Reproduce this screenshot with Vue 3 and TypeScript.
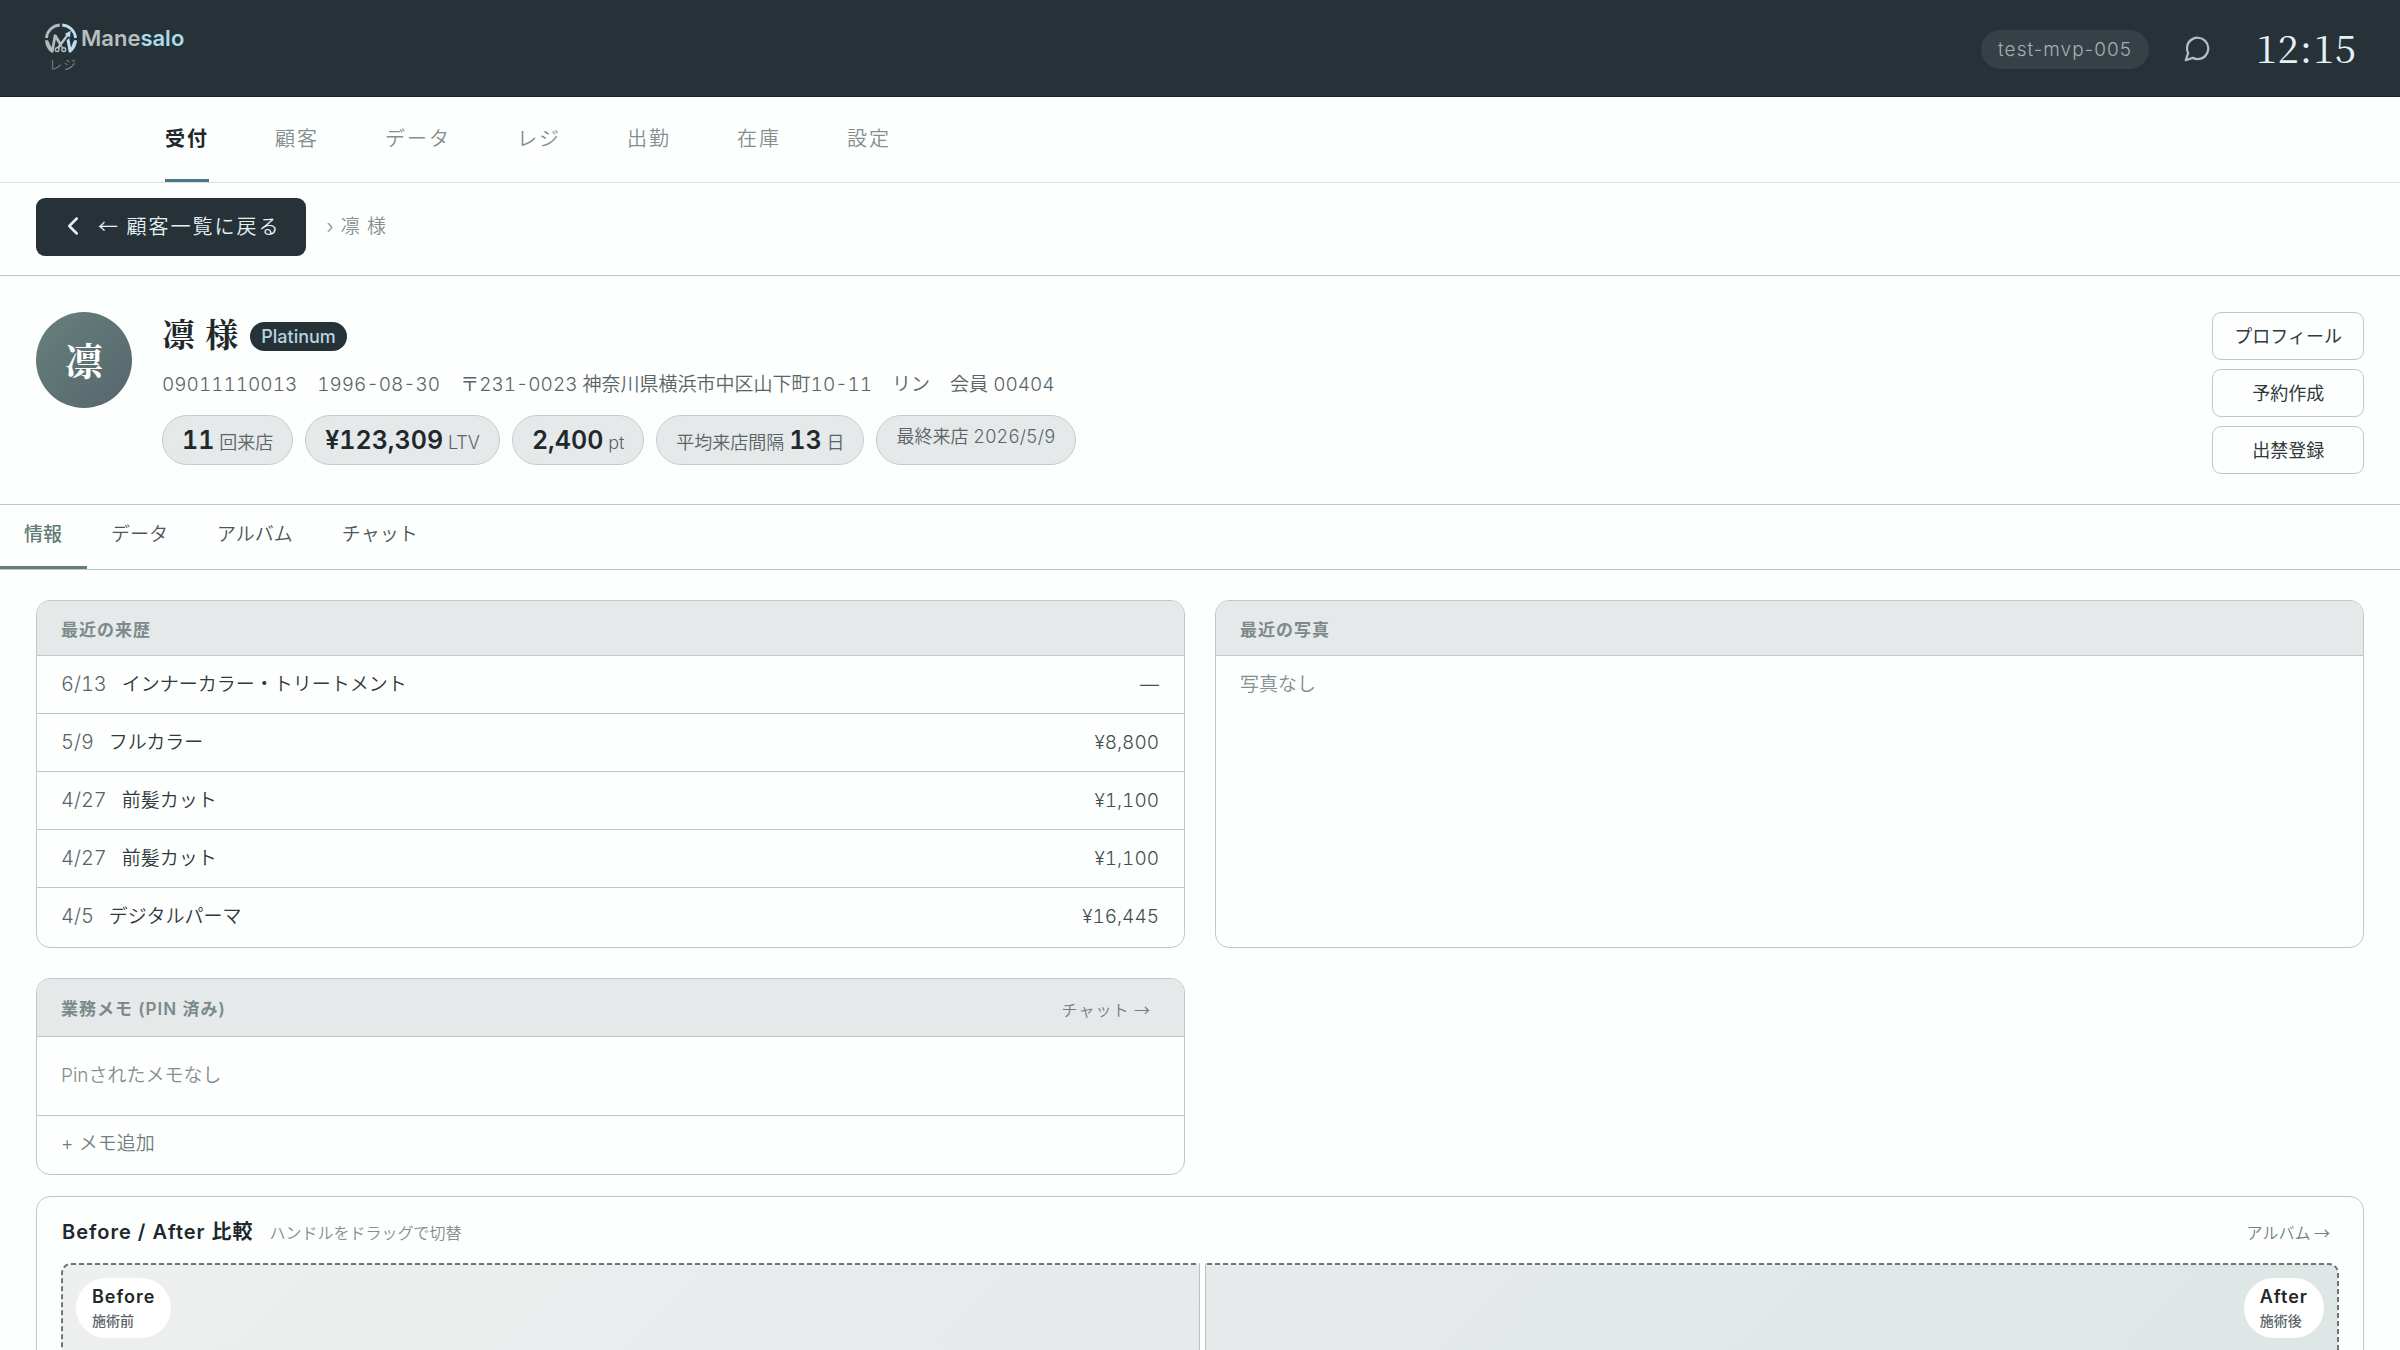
<script setup lang="ts">
import { ref } from 'vue'

interface Visit {
  date: string
  menu: string
  price: string
}

interface Stat {
  before?: string
  value?: string
  after?: string
}

const navItems: string[] = ['受付', '顧客', 'データ', 'レジ', '出勤', '在庫', '設定']
const activeNav = ref('受付')

const tabs: string[] = ['情報', 'データ', 'アルバム', 'チャット']
const activeTab = ref('情報')

const details: string[] = [
  '09011110013',
  '1996-08-30',
  '〒231-0023 神奈川県横浜市中区山下町10-11',
  'リン',
  '会員 00404',
]

const stats: Stat[] = [
  { value: '11', after: ' 回来店' },
  { value: '¥123,309', after: ' LTV' },
  { value: '2,400', after: ' pt' },
  { before: '平均来店間隔 ', value: '13', after: ' 日' },
  { before: '最終来店 2026/5/9' },
]

const actions: string[] = ['プロフィール', '予約作成', '出禁登録']

const visits: Visit[] = [
  { date: '6/13', menu: 'インナーカラー・トリートメント', price: '—' },
  { date: '5/9', menu: 'フルカラー', price: '¥8,800' },
  { date: '4/27', menu: '前髪カット', price: '¥1,100' },
  { date: '4/27', menu: '前髪カット', price: '¥1,100' },
  { date: '4/5', menu: 'デジタルパーマ', price: '¥16,445' },
]

const split = ref(50)
</script>

<template>
  <div class="app">
    <header class="topbar">
      <a class="brand" href="#">
        <span class="brand-row">
          <svg class="brand-mark" viewBox="0 0 34 30" aria-hidden="true">
            <g fill="none" stroke-width="2.8">
              <path d="M15.8 2A14.4 14.4 0 0 0 2.4 15" stroke="#b4babc" />
              <path d="M18.2 2A14.4 14.4 0 0 1 31.6 15" stroke="#b9dff0" />
            </g>
            <path d="M1 17.200H4L7.600 24.500L9.800 11.500H12.200L17.400 20L15.600 22.600L11.800 16.500L9.400 29.500H7.200C3.400 26.500 1.200 22 1 17.200Z" fill="#b4babc" />
            <path d="M33 17.200H30L27 24.500L25.200 15L22.600 17.500L24.800 29.500H26.800C30.600 26.500 32.800 22 33 17.200Z" fill="#b9dff0" />
            <path d="M14 25L24 11.500" fill="none" stroke="#b6ccd6" stroke-width="2.200" />
            <path d="M20.800 11L26.600 7.800L26 14.400Z" fill="#b9dff0" />
            <circle cx="13.200" cy="26.600" r="1.900" fill="none" stroke="#b4babc" stroke-width="1.400" />
            <circle cx="19.800" cy="26.600" r="1.900" fill="none" stroke="#b6c4ca" stroke-width="1.400" />
            <path d="M15.800 21.500L19 25" fill="none" stroke="#b4babc" stroke-width="1.600" />
          </svg>
          <span class="brand-name">Mane<span class="brand-tail">salo</span></span>
        </span>
        <span class="brand-sub">レジ</span>
      </a>
      <div class="topbar-right">
        <span class="account">test-mvp-005</span>
        <button class="chat-button" type="button" aria-label="チャット">
          <svg viewBox="0 0 24 24" width="30" height="30" fill="none" stroke="currentColor" stroke-width="1.8" stroke-linecap="round" stroke-linejoin="round">
            <path d="M21 11.5a8.38 8.38 0 0 1-.9 3.8 8.5 8.5 0 0 1-7.600 4.700 8.380 8.380 0 0 1-3.800-.9L3 21l1.900-5.700a8.380 8.380 0 0 1-.9-3.800 8.500 8.500 0 0 1 4.700-7.600 8.380 8.380 0 0 1 3.800-.9h.5a8.480 8.480 0 0 1 8 8v.5z" />
          </svg>
        </button>
        <time class="clock">12:15</time>
      </div>
    </header>

    <nav class="mainnav">
      <a
        v-for="item in navItems"
        :key="item"
        href="#"
        :class="['nav-link', { active: item === activeNav }]"
        @click.prevent="activeNav = item"
      >{{ item }}</a>
    </nav>

    <div class="crumbs">
      <button class="back" type="button">
        <svg viewBox="0 0 24 24" width="30" height="30" fill="none" stroke="currentColor" stroke-width="2" stroke-linecap="round" stroke-linejoin="round" aria-hidden="true">
          <path d="M15 18l-6-6 6-6" />
        </svg>
        <span>← 顧客一覧に戻る</span>
      </button>
      <span class="crumb">› 凛 様</span>
    </div>

    <section class="hero">
      <div class="avatar">凛</div>
      <div class="hero-body">
        <div class="name-row">
          <h1 class="name">凛 様</h1>
          <span class="rank">Platinum</span>
        </div>
        <div class="details">
          <span v-for="d in details" :key="d">{{ d }}</span>
        </div>
        <div class="stats">
          <span v-for="(s, i) in stats" :key="i" class="stat">{{ s.before }}<strong v-if="s.value">{{ s.value }}</strong>{{ s.after }}</span>
        </div>
      </div>
      <div class="actions">
        <button v-for="a in actions" :key="a" class="action" type="button">{{ a }}</button>
      </div>
    </section>

    <div class="tabs" role="tablist">
      <button
        v-for="t in tabs"
        :key="t"
        type="button"
        role="tab"
        :aria-selected="t === activeTab"
        :class="['tab', { active: t === activeTab }]"
        @click="activeTab = t"
      >{{ t }}</button>
    </div>

    <main class="content">
      <div class="cards">
        <section class="card">
          <header class="card-head"><h2>最近の来歴</h2></header>
          <ul class="visits">
            <li v-for="(v, i) in visits" :key="i" class="visit">
              <span class="visit-date">{{ v.date }}</span>
              <span class="visit-menu">{{ v.menu }}</span>
              <span class="visit-price">{{ v.price }}</span>
            </li>
          </ul>
        </section>

        <section class="card">
          <header class="card-head"><h2>最近の写真</h2></header>
          <p class="empty">写真なし</p>
        </section>

        <section class="card">
          <header class="card-head memo-head">
            <h2>業務メモ (PIN 済み)</h2>
            <a class="more spaced" href="#">チャット →</a>
          </header>
          <p class="empty memo-empty">Pinされたメモなし</p>
          <button class="add-memo" type="button">+ メモ追加</button>
        </section>
      </div>

      <section class="card compare-card">
        <header class="compare-head">
          <h2>Before / After 比較</h2>
          <span class="hint">ハンドルをドラッグで切替</span>
          <a class="more" href="#">アルバム →</a>
        </header>
        <div class="compare">
          <div class="side before" :style="{ width: split + '%' }"></div>
          <div class="side after"></div>
          <svg class="outline" aria-hidden="true">
            <rect width="100%" height="100%" rx="9" />
          </svg>
          <div class="divider" :style="{ left: split + '%' }"></div>
          <div class="label label-before"><b>Before</b><small>施術前</small></div>
          <div class="label label-after"><b>After</b><small>施術後</small></div>
          <input v-model.number="split" class="slider" type="range" min="0" max="100" aria-label="Before / After 比較" />
        </div>
      </section>
    </main>
  </div>
</template>

<style>
html,
body {
  margin: 0;
  background: #fdfefe;
}
</style>

<style scoped>
.app {
  --line: #bccaca;
  --ink: #263238;
  --body: #5a6466;
  --mute: #848e8e;
  display: flex;
  flex-direction: column;
  height: 100vh;
  overflow: hidden;
  font-family: Inter, 'Noto Sans CJK JP', sans-serif;
  font-size: 19px;
  font-weight: 350;
  line-height: 28px;
  color: var(--body);
  background: #fdfefe;
}

.app * {
  box-sizing: border-box;
}

.app > * {
  flex-shrink: 0;
}

button {
  font: inherit;
  color: inherit;
  margin: 0;
  padding: 0;
  border: 0;
  background: none;
  cursor: pointer;
}

a {
  color: inherit;
  text-decoration: none;
}

h1,
h2,
p,
ul {
  margin: 0;
  padding: 0;
}

/* top bar */
.topbar {
  display: flex;
  align-items: center;
  justify-content: space-between;
  height: 97px;
  padding: 0 43px 0 44px;
  background: var(--ink);
  border-bottom: 1px solid #1b2629;
}

.brand {
  display: flex;
  flex-direction: column;
  gap: 2px;
  padding-bottom: 1px;
}

.brand-row {
  display: flex;
  align-items: center;
  gap: 3px;
}

.brand-mark {
  width: 34px;
  height: 30px;
}

.brand-name {
  font-size: 22px;
  font-weight: 600;
  color: #b8bec0;
}

.brand-tail {
  color: #a9dcea;
}

.brand-sub {
  padding-left: 5px;
  font-size: 13px;
  line-height: 18px;
  letter-spacing: 1px;
  color: #7a868a;
}

.topbar-right {
  display: flex;
  align-items: center;
  padding-top: 2px;
}

.account {
  height: 39px;
  padding: 0 17px;
  border-radius: 20px;
  background: #354146;
  font-size: 19px;
  font-weight: 300;
  line-height: 40px;
  letter-spacing: 1px;
  color: #a3b0b3;
}

.chat-button {
  display: flex;
  margin: 0 44px 0 33px;
  color: #b0bfc4;
}

.clock {
  padding-bottom: 5px;
  font-family: 'Noto Serif CJK JP', 'Liberation Serif', serif;
  font-size: 38px;
  font-weight: 400;
  line-height: 48px;
  letter-spacing: 1px;
  color: #e4f2f5;
}

/* main navigation */
.mainnav {
  display: flex;
  gap: 66px;
  height: 86px;
  padding-left: 165px;
  border-bottom: 1px solid #dcdfdf;
}

.nav-link {
  display: flex;
  align-items: center;
  padding-top: 1px;
  border-bottom: 3px solid transparent;
  font-size: 20px;
  letter-spacing: 2px;
  color: var(--mute);
}

.nav-link.active {
  font-weight: 600;
  color: #20282b;
  border-bottom-color: #4a7688;
}

/* breadcrumb row */
.crumbs {
  display: flex;
  align-items: center;
  gap: 20px;
  height: 93px;
  padding: 0 36px 4px;
  border-bottom: 1px solid var(--line);
}

.back {
  display: flex;
  align-items: center;
  gap: 10px;
  height: 58px;
  padding: 0 26px 2px 22px;
  border-radius: 9px;
  background: var(--ink);
  color: #e4f0f2;
  font-family: 'Noto Sans CJK JP', sans-serif;
  font-size: 20px;
  letter-spacing: 2px;
}

.crumb {
  letter-spacing: 1px;
  color: var(--mute);
}

/* customer summary */
.hero {
  display: flex;
  align-items: flex-start;
  padding: 36px 36px 30px;
  border-bottom: 1px solid var(--line);
}

.avatar {
  width: 96px;
  height: 96px;
  border-radius: 50%;
  background: linear-gradient(135deg, #67807c, #56666c);
  font-family: 'Noto Serif CJK JP', 'Noto Sans CJK JP', serif;
  font-size: 38px;
  font-weight: 700;
  line-height: 94px;
  text-align: center;
  color: #fff;
}

.hero-body {
  flex: 1;
  padding-left: 30px;
}

.name-row {
  display: flex;
  align-items: center;
  gap: 11px;
  height: 48px;
}

.name {
  font-family: 'Liberation Serif', 'Noto Serif CJK JP', 'Noto Sans CJK JP', serif;
  font-size: 33px;
  font-weight: 700;
  line-height: 50px;
  letter-spacing: 1px;
  color: #20282b;
}

.rank {
  height: 29px;
  padding: 0 11px;
  border-radius: 15px;
  background: var(--ink);
  font-size: 18px;
  font-weight: 500;
  line-height: 29px;
  color: #b4d6de;
}

.details {
  display: flex;
  gap: 20px;
  padding: 11px 0 16px;
  font-variant-numeric: tabular-nums;
}

.stats {
  display: flex;
  gap: 12px;
}

.stat {
  height: 50px;
  padding: 7px 19px;
  border: 1px solid #c6cccc;
  border-radius: 25px;
  background: #e5e9ea;
  font-size: 18px;
  font-variant-numeric: tabular-nums;
  white-space: pre;
}

.stat strong {
  font-size: 25px;
  font-weight: 600;
  line-height: 34px;
  color: #20282b;
}

.actions {
  display: flex;
  flex-direction: column;
  gap: 9px;
}

.action {
  height: 48px;
  padding: 2px 21px 0;
  border: 1px solid var(--line);
  border-radius: 9px;
  font-size: 18px;
  font-weight: 400;
  color: #30383a;
}

/* tabs */
.tabs {
  display: flex;
  height: 65px;
  border-bottom: 1px solid var(--line);
}

.tab {
  padding: 0 25px 2px 24px;
  border-bottom: 3px solid transparent;
  color: #4c5658;
}

.tab.active {
  font-weight: 500;
  color: #5f7b74;
  border-bottom-color: #647f79;
}

/* cards */
.content {
  display: flex;
  flex-direction: column;
  gap: 21px;
  padding: 30px 36px;
}

.cards {
  display: grid;
  grid-template-columns: 1fr 1fr;
  gap: 30px;
}

.card {
  border: 1px solid var(--line);
  border-radius: 14px;
  overflow: hidden;
}

.card-head {
  display: flex;
  align-items: center;
  justify-content: space-between;
  height: 55px;
  padding: 3px 25px 0 24px;
  border-bottom: 1px solid var(--line);
  background: #e5e9ea;
}

.card-head h2 {
  font-size: 17px;
  font-weight: 600;
  letter-spacing: 1px;
  color: #7c8a8b;
}

.memo-head {
  height: 58px;
}

.more {
  padding: 0 8px;
  font-family: 'Noto Sans CJK JP', sans-serif;
  font-size: 16px;
  color: #727e7f;
}

.spaced {
  letter-spacing: 1px;
}

.visits {
  list-style: none;
}

.visit {
  display: flex;
  align-items: baseline;
  gap: 15px;
  height: 58px;
  padding: 14px 25px 0 24px;
  border-bottom: 1px solid var(--line);
}

.visit:last-child {
  height: 59px;
  border-bottom: 0;
}

.visit-date {
  font-size: 20px;
  font-variant-numeric: tabular-nums;
}

.visit-menu {
  flex: 1;
  color: #30383a;
}

.visit-price {
  font-variant-numeric: tabular-nums;
  color: #444e50;
}

.empty {
  padding: 15px 24px 14px;
  color: var(--mute);
}

.memo-empty {
  padding: 25px 24px;
  border-bottom: 1px solid var(--line);
}

.add-memo {
  display: block;
  width: 100%;
  height: 58px;
  padding: 0 24px 2px;
  text-align: left;
  color: #727e7f;
}

/* before / after comparison */
.compare-card {
  padding: 21px 25px 25px;
}

.compare-head {
  display: flex;
  align-items: baseline;
  gap: 16px;
  padding-bottom: 17px;
}

.compare-head h2 {
  font-size: 20px;
  font-weight: 600;
  letter-spacing: 1px;
  color: #20282b;
}

.hint {
  flex: 1;
  font-size: 16px;
  color: var(--mute);
}

.compare {
  position: relative;
  display: flex;
  height: 420px;
  border-radius: 9px;
}

.side.before {
  border-radius: 9px 0 0 9px;
  background: linear-gradient(135deg, #eeefef, #e3e8e9);
}

.side.after {
  flex: 1;
  border-radius: 0 9px 9px 0;
  background: linear-gradient(135deg, #e7eaeb, #dbe5e4);
}

.outline {
  position: absolute;
  inset: 0;
  width: 100%;
  height: 100%;
  overflow: visible;
}

.outline rect {
  fill: none;
  stroke: #6c7677;
  stroke-width: 2px;
  stroke-dasharray: 5 3;
}

.divider {
  position: absolute;
  top: -1px;
  bottom: 0;
  width: 5px;
  background: #fff;
  box-shadow: 0 0 0 1px #bcc0c0;
  clip-path: inset(0 -1px);
}

.label {
  position: absolute;
  top: 14px;
  display: flex;
  flex-direction: column;
  padding: 6px 16px;
  border-radius: 30px;
  background: #fff;
}

.label b {
  font-size: 18px;
  font-weight: 600;
  line-height: 26px;
  letter-spacing: 1px;
  color: #20282b;
}

.label small {
  font-size: 14px;
  font-weight: 500;
  line-height: 22px;
  color: var(--body);
}

.label-before {
  left: 14px;
}

.label-after {
  right: 14px;
}

.slider {
  position: absolute;
  inset: 0;
  width: 100%;
  height: 100%;
  margin: 0;
  opacity: 0;
  cursor: ew-resize;
}
</style>
